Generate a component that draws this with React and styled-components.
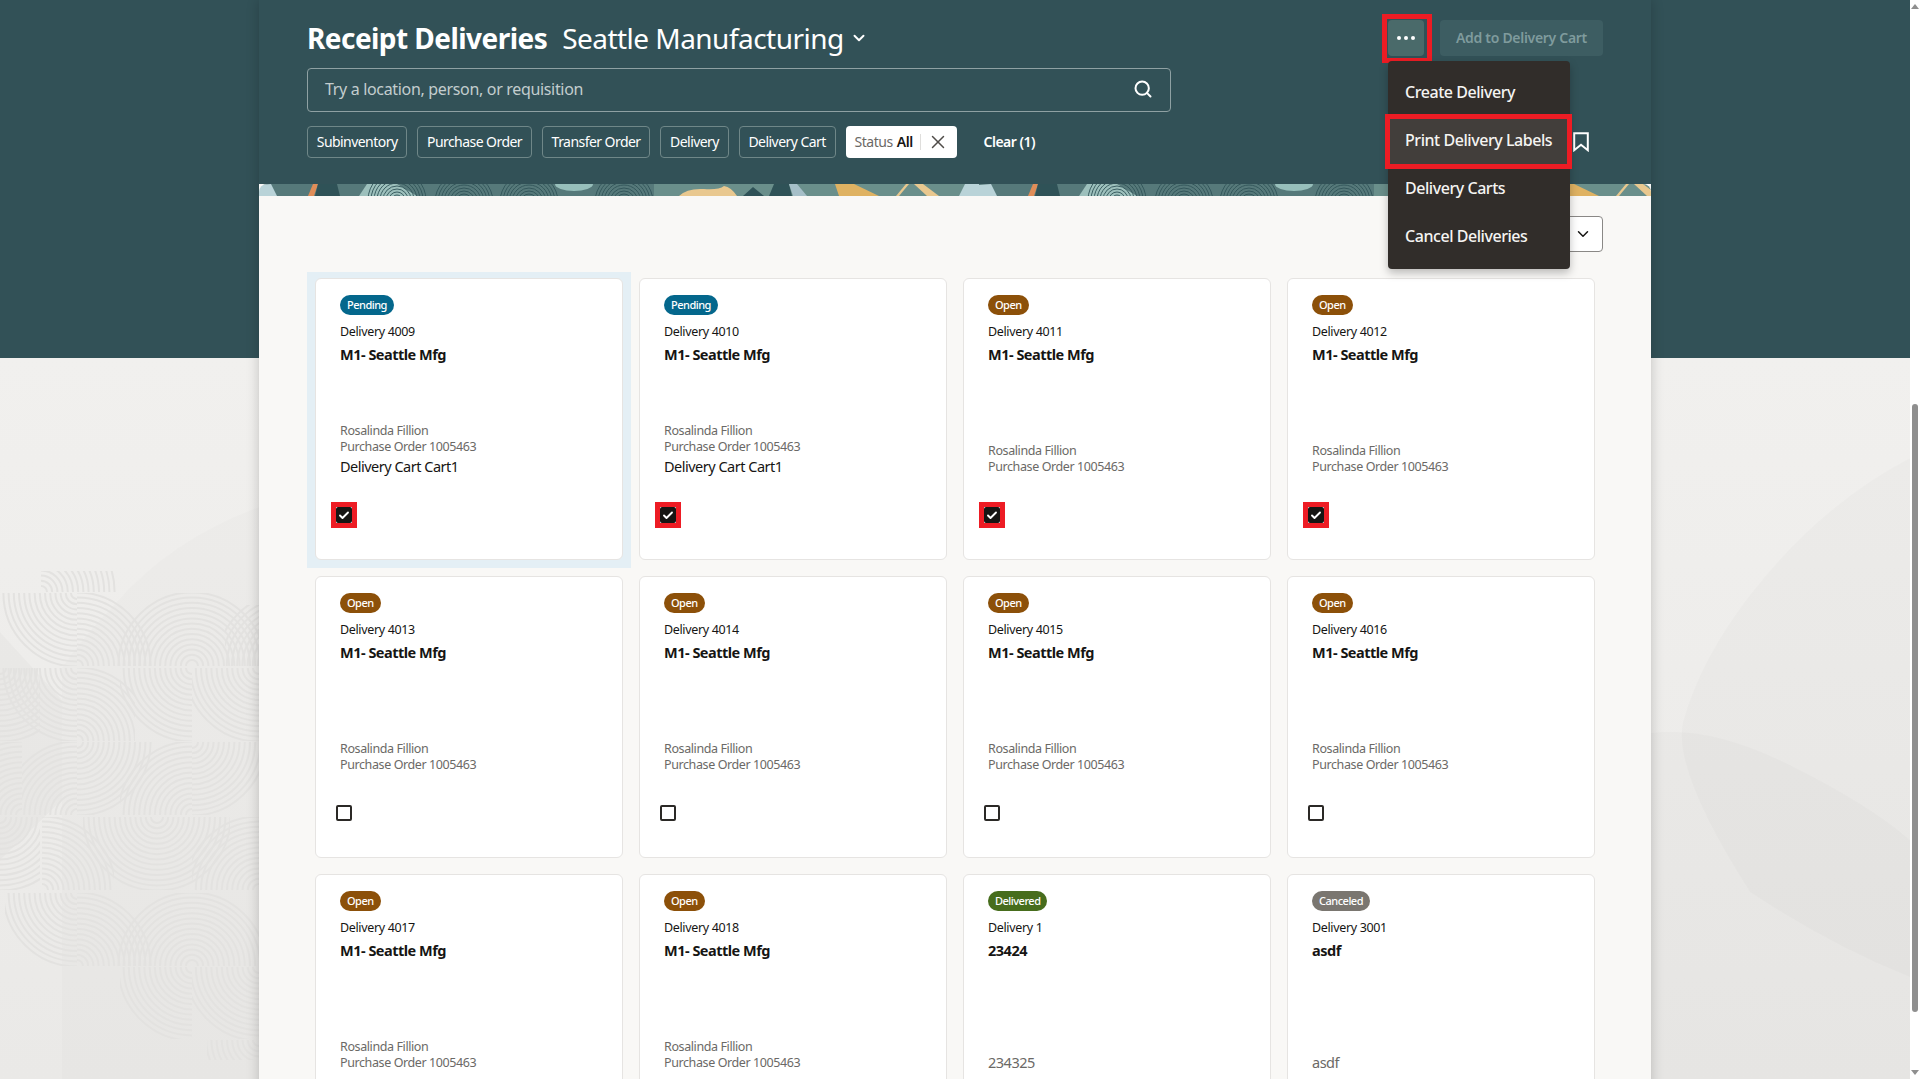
import styled, { createGlobalStyle } from "styled-components";
import { Search, ChevronDown, X, Check } from "lucide-react";

const GlobalStyle = createGlobalStyle`
  html, body {
    margin: 0;
    height: 100%;
    overflow: hidden;
    font-family: "Noto Sans", "Liberation Sans", sans-serif;
    color: #161513;
  }
  * {
    box-sizing: border-box;
  }
`;

const cards = [
  { status: "Pending", id: "Delivery 4009", title: "M1- Seattle Mfg", cart: "Delivery Cart Cart1", checked: true, selected: true },
  { status: "Pending", id: "Delivery 4010", title: "M1- Seattle Mfg", cart: "Delivery Cart Cart1", checked: true },
  { status: "Open", id: "Delivery 4011", title: "M1- Seattle Mfg", checked: true },
  { status: "Open", id: "Delivery 4012", title: "M1- Seattle Mfg", checked: true },
  { status: "Open", id: "Delivery 4013", title: "M1- Seattle Mfg" },
  { status: "Open", id: "Delivery 4014", title: "M1- Seattle Mfg" },
  { status: "Open", id: "Delivery 4015", title: "M1- Seattle Mfg" },
  { status: "Open", id: "Delivery 4016", title: "M1- Seattle Mfg" },
  { status: "Open", id: "Delivery 4017", title: "M1- Seattle Mfg" },
  { status: "Open", id: "Delivery 4018", title: "M1- Seattle Mfg" },
  { status: "Delivered", id: "Delivery 1", title: "23424", note: "234325" },
  { status: "Canceled", id: "Delivery 3001", title: "asdf", note: "asdf" },
];

const filters = ["Subinventory", "Purchase Order", "Transfer Order", "Delivery", "Delivery Cart"];
const menuItems = ["Create Delivery", "Print Delivery Labels", "Delivery Carts", "Cancel Deliveries"];

const badgeColors = {
  Pending: "#04678c",
  Open: "#8c5009",
  Delivered: "#476d1d",
  Canceled: "#7a7670",
};

// fingerprint tiles on the left of the page: clip x, y, w, h, then arc centre
const tiles = [
  [41, 571, 75, 21, 41, 592],
  [0, 593, 77, 73, 77, 593],
  [77, 593, 115, 73, 77, 666],
  [77, 593, 115, 73, 192, 666],
  [192, 593, 67, 73, 192, 666],
  [225, 605, 34, 61, 290, 666],
  [0, 668, 40, 73, 0, 668],
  [0, 668, 77, 73, 77, 668],
  [77, 668, 58, 73, 77, 741],
  [120, 668, 72, 73, 192, 668],
  [192, 668, 67, 73, 259, 668],
  [0, 742, 22, 73, 22, 815],
  [22, 742, 55, 73, 77, 815],
  [77, 742, 75, 73, 77, 742],
  [120, 742, 72, 73, 192, 815],
  [192, 742, 67, 73, 192, 742],
  [0, 817, 40, 73, 0, 817],
  [42, 817, 72, 73, 42, 890],
  [83, 817, 74, 73, 157, 817],
  [157, 817, 73, 73, 157, 817],
  [192, 817, 67, 73, 259, 890],
  [5, 893, 72, 73, 77, 893],
  [77, 893, 115, 73, 77, 966],
  [77, 893, 115, 73, 192, 966],
  [192, 893, 67, 73, 192, 966],
  [120, 967, 72, 72, 192, 967],
  [192, 967, 67, 72, 259, 967],
  [207, 1040, 52, 20, 259, 1040],
];

const radii = Array.from({ length: 14 }, (_, i) => 6 + i * 5.2);

const PageArt = () => (
  <Art viewBox="0 358 1910 721" preserveAspectRatio="none">
    <path d="M259 507 Q170 540 115 604 Q80 640 62 668 L62 1079 L259 1079 Z" fill="rgba(0,0,0,.012)" />
    <path d="M0 632 L62 700 L62 800 L0 860 Z" fill="rgba(0,0,0,.02)" />
    <path d="M1910 458 Q1820 505 1750 595 Q1700 660 1683 722 Q1672 770 1750 892 Q1830 945 1910 977 Z" fill="rgba(0,0,0,.014)" />
    <path d="M1651 733 Q1710 725 1790 765 T1910 840 L1910 1079 L1651 1079 Z" fill="rgba(0,0,0,.014)" />
    <defs>
      {tiles.map((t, i) => (
        <clipPath key={i} id={`tile-${i}`}>
          <rect x={t[0]} y={t[1]} width={t[2]} height={t[3]} />
        </clipPath>
      ))}
    </defs>
    {tiles.map((t, i) => (
      <g key={i} clipPath={`url(#tile-${i})`} fill="none" stroke="#e3e2e0" strokeWidth="2">
        {radii.map((r) => (
          <circle key={r} cx={t[4]} cy={t[5]} r={r} />
        ))}
      </g>
    ))}
  </Art>
);

const BannerArt = () => (
  <BannerSvg>
    <defs>
      <pattern id="banner-tile" width="720" height="12" patternUnits="userSpaceOnUse">
        <rect width="400" height="12" fill="#56797a" />
        <rect x="395" width="325" height="12" fill="#6a8f8b" />
        <path d="M0 12 L0 1 L12 0 L18 12 Z" fill="#b9d3d8" />
        <path d="M700 12 L706 0 L720 0 L720 12 Z" fill="#b9d3d8" />
        <path d="M49 12 L54 0 L59 0 L55 12 Z" fill="#e08d58" />
        <path d="M56 12 L59 0 L78 0 L81 12 Z" fill="#2f5257" />
        <path d="M100 12 L108 0 L138 0 L158 12 Z" fill="#9dc0bc" />
        <g fill="none" stroke="#2f5257" strokeWidth=".9">
          {[5, 8, 11, 14, 17, 20, 23, 26, 29].map((r) => (
            <g key={r}>
              <circle cx="138" cy="16" r={r} />
              <circle cx="205" cy="18" r={r} />
              <circle cx="270" cy="18" r={r} />
              <circle cx="365" cy="18" r={r} />
            </g>
          ))}
        </g>
        <ellipse cx="315" cy="0" rx="19" ry="7" fill="#97bfbb" />
        <path d="M420 12 Q428 4 445 5 Q460 6 465 2 Q472 3 478 12 Z" fill="#e9c88f" />
        <path d="M484 12 L494 3 L505 12 Z" fill="#2f5257" />
        <path d="M510 12 L515 0 L530 0 L533 12 Z" fill="#2f5257" />
        <path d="M530 0 L538 0 L548 12 L534 12 Z" fill="#a6bfc8" />
        <path d="M576 0 L595 0 L620 12 L580 12 Z" fill="#dfb262" />
        <path d="M637 12 L647 0 L650 0 L640 12 Z" fill="#e9c88f" />
        <path d="M655 0 L664 0 L680 12 L668 12 Z" fill="#e9c88f" />
      </pattern>
    </defs>
    <rect width="100%" height="12" fill="url(#banner-tile)" />
  </BannerSvg>
);

const Card = ({ card }) => (
  <CardBox $selected={card.selected}>
    <Badge $bg={badgeColors[card.status]}>{card.status}</Badge>
    <DeliveryId>{card.id}</DeliveryId>
    <CardTitle>{card.title}</CardTitle>
    <CardBottom>
      {card.note ? (
        <CartLine $muted>{card.note}</CartLine>
      ) : (
        <>
          <Meta $hasCart={!!card.cart}>
            <div>Rosalinda Fillion</div>
            <div>Purchase Order 1005463</div>
          </Meta>
          {card.cart && <CartLine>{card.cart}</CartLine>}
        </>
      )}
    </CardBottom>
    <CheckBox $checked={card.checked}>
      {card.checked && <Check size={13} strokeWidth={3.8} color="#fff" />}
    </CheckBox>
  </CardBox>
);

const App = () => (
  <Page>
    <GlobalStyle />
    <Main>
      <PageArt />
      <Panel>
        <Header>
          <TitleRow>
            <Titles>
              <Title>Receipt Deliveries</Title>
              <Location>Seattle Manufacturing</Location>
              <ChevronDown size={18} strokeWidth={2.6} color="#fff" />
            </Titles>
            <Actions>
              <MoreWrap>
                <MoreButton>
                  <Dot />
                  <Dot />
                  <Dot />
                </MoreButton>
                <Menu>
                  {menuItems.map((item) => (
                    <MenuItem key={item} $marked={item === "Print Delivery Labels"}>
                      {item}
                    </MenuItem>
                  ))}
                </Menu>
              </MoreWrap>
              <AddButton>Add to Delivery Cart</AddButton>
            </Actions>
          </TitleRow>
          <SearchBox>
            <span>Try a location, person, or requisition</span>
            <Search size={20} strokeWidth={2.4} color="#fff" />
          </SearchBox>
          <ChipRow>
            {filters.map((f) => (
              <Chip key={f}>{f}</Chip>
            ))}
            <StatusChip>
              <StatusLabel>Status</StatusLabel>
              <StatusValue>All</StatusValue>
              <StatusDivider />
              <X size={22} strokeWidth={1.6} color="#4f4c49" />
            </StatusChip>
            <ClearLink>Clear (1)</ClearLink>
            <Bookmark viewBox="0 0 16 20">
              <path d="M1.2 1.2 H14.8 V18.2 L8 12.8 L1.2 18.2 Z" fill="none" stroke="#fff" strokeWidth="2" />
            </Bookmark>
          </ChipRow>
        </Header>
        <Banner>
          <BannerArt />
        </Banner>
        <Body>
          <SortRow>
            <SortSelect>
              <ChevronDown size={18} strokeWidth={2} color="#161513" />
            </SortSelect>
          </SortRow>
          <CardGrid>
            {cards.map((card) => (
              <Card key={card.id} card={card} />
            ))}
          </CardGrid>
        </Body>
      </Panel>
    </Main>
    <ScrollTrack>
      <ArrowUp />
      <Thumb />
      <ArrowDown />
    </ScrollTrack>
  </Page>
);

export default App;

const Page = styled.div`
  display: flex;
  height: 100vh;
  overflow: hidden;
`;

const Main = styled.div`
  position: relative;
  flex: 1;
  overflow: hidden;
  background: linear-gradient(#325157 0 358px, #f1f0ee 358px, #eae9e7 100%);
`;

const Art = styled.svg`
  position: absolute;
  left: 0;
  top: 358px;
  width: 100%;
  height: 721px;
`;

const Panel = styled.div`
  position: relative;
  width: 1392px;
  margin: 0 auto;
  box-shadow: 0 0 12px rgba(0, 0, 0, 0.2);
`;

const Header = styled.div`
  background: #325157;
  padding: 20px 48px 26px;
`;

const TitleRow = styled.div`
  display: flex;
  justify-content: space-between;
  align-items: center;
  height: 36px;
`;

const Titles = styled.div`
  display: flex;
  align-items: center;
  color: #fff;
`;

const Title = styled.h1`
  margin: 0 15px 0 0;
  font-size: 28px;
  font-weight: 700;
  letter-spacing: -0.55px;
  line-height: 36px;
`;

const Location = styled.span`
  font-size: 28px;
  letter-spacing: -0.53px;
  line-height: 36px;
  margin-right: 6px;
`;

const Actions = styled.div`
  display: flex;
  gap: 16px;
`;

const MoreWrap = styled.div`
  position: relative;
`;

const MoreButton = styled.div`
  position: relative;
  display: flex;
  align-items: center;
  justify-content: center;
  gap: 3px;
  width: 36px;
  height: 36px;
  border-radius: 4px;
  background: #4a6a6a;

  &::after {
    content: "";
    position: absolute;
    inset: -6px -8px -7px -6px;
    border: 5px solid #ed1c24;
  }
`;

const Dot = styled.span`
  width: 4px;
  height: 4px;
  border-radius: 50%;
  background: #fff;
`;

const Menu = styled.div`
  position: absolute;
  left: 0;
  top: 41px;
  width: 182px;
  height: 208px;
  z-index: 5;
  padding-top: 7px;
  background: #312d2a;
  border-radius: 4px;
  box-shadow: 0 4px 8px rgba(0, 0, 0, 0.25);
`;

const MenuItem = styled.div`
  position: relative;
  display: flex;
  align-items: center;
  height: 48px;
  padding-left: 17px;
  font-size: 16px;
  font-weight: 500;
  letter-spacing: -0.45px;
  white-space: nowrap;
  color: #f5f4f2;
  background: ${(p) => (p.$marked ? "#423e3b" : "transparent")};

  ${(p) =>
    p.$marked &&
    `&::after {
      content: "";
      position: absolute;
      inset: -2px -2px -5px -3px;
      border: 5px solid #ed1c24;
    }`}
`;

const AddButton = styled.div`
  display: flex;
  align-items: center;
  justify-content: center;
  width: 163px;
  height: 36px;
  padding-bottom: 2px;
  border-radius: 4px;
  background: #3d5d62;
  color: #7f9b9d;
  font-size: 14px;
  font-weight: 600;
  letter-spacing: -0.3px;
`;

const SearchBox = styled.div`
  display: flex;
  align-items: center;
  justify-content: space-between;
  width: 864px;
  height: 44px;
  margin-top: 12px;
  padding: 0 17px 2px;
  border: 1px solid #8fa1a3;
  border-radius: 4px;
  color: #c3cdce;
  font-size: 16px;
  letter-spacing: -0.33px;
`;

const ChipRow = styled.div`
  display: flex;
  align-items: center;
  gap: 10px;
  height: 32px;
  margin-top: 14px;
  padding-right: 14px;
`;

const Chip = styled.div`
  display: flex;
  align-items: center;
  height: 32px;
  padding: 0 8.75px 2px;
  border: 1px solid #6f8788;
  border-radius: 4px;
  color: #fff;
  font-size: 14px;
  letter-spacing: -0.55px;
  white-space: nowrap;
`;

const StatusChip = styled.div`
  display: flex;
  align-items: center;
  width: 111px;
  height: 32px;
  padding-left: 9px;
  border-radius: 4px;
  background: #fff;
  font-size: 14px;
  letter-spacing: -0.45px;
`;

const StatusLabel = styled.span`
  color: #6b6966;
  margin: 0 4px 2px 0;
`;

const StatusValue = styled.span`
  margin-bottom: 2px;
  font-weight: 600;
`;

const StatusDivider = styled.span`
  width: 1px;
  height: 16px;
  margin: 0 6px 0 7px;
  background: #dfdedc;
`;

const ClearLink = styled.div`
  margin-left: 17px;
  margin-bottom: 2px;
  color: #fff;
  font-size: 14px;
  font-weight: 600;
  letter-spacing: -0.5px;
`;

const Bookmark = styled.svg`
  width: 16px;
  height: 20px;
  margin-left: auto;
`;

const Banner = styled.div`
  height: 12px;
  background: #f9f8f6;
`;

const BannerSvg = styled.svg`
  display: block;
  width: 100%;
  height: 12px;
  border-radius: 8px 8px 0 0;
`;

const Body = styled.div`
  padding: 20px 48px 60px 56px;
  background: #f9f8f6;
`;

const SortRow = styled.div`
  display: flex;
  justify-content: flex-end;
`;

const SortSelect = styled.div`
  display: flex;
  align-items: center;
  justify-content: flex-end;
  width: 200px;
  height: 36px;
  padding-right: 10px;
  background: #fff;
  border: 1px solid #8a8886;
  border-radius: 4px;
`;

const CardGrid = styled.div`
  display: grid;
  grid-template-columns: repeat(4, 308px);
  grid-auto-rows: 282px;
  gap: 16px;
  margin-top: 26px;
  isolation: isolate;
`;

const CardBox = styled.div`
  position: relative;
  display: flex;
  flex-direction: column;
  align-items: flex-start;
  padding: 16px 24px 36px;
  background: #fff;
  border: 1px solid #e6e4e2;
  border-radius: 6px;

  ${(p) =>
    p.$selected &&
    `&::before {
      content: "";
      position: absolute;
      inset: -7px -9px -9px -9px;
      z-index: -1;
      background: #e4eff5;
    }`}
`;

const Badge = styled.span`
  display: flex;
  align-items: center;
  height: 20px;
  padding: 0 7px 1px;
  border-radius: 10px;
  background: ${(p) => p.$bg};
  color: #fff;
  font-size: 11px;
  font-weight: 500;
  letter-spacing: -0.5px;
`;

const DeliveryId = styled.div`
  margin-top: 8px;
  font-size: 12.5px;
  line-height: 18px;
  letter-spacing: -0.35px;
`;

const CardTitle = styled.div`
  margin-top: 3px;
  font-size: 14.5px;
  font-weight: 700;
  line-height: 20px;
  letter-spacing: -0.5px;
`;

const CardBottom = styled.div`
  margin-top: auto;
  margin-bottom: 30px;
`;

const Meta = styled.div`
  margin-bottom: ${(p) => (p.$hasCart ? "0" : "2px")};
  color: #6b6966;
  font-size: 12.5px;
  line-height: 16px;
  letter-spacing: -0.4px;
`;

const CartLine = styled.div`
  font-size: 14.5px;
  line-height: 22px;
  letter-spacing: -0.5px;
  color: ${(p) => (p.$muted ? "#6b6966" : "#161513")};
`;

const CheckBox = styled.div`
  position: relative;
  display: flex;
  align-items: center;
  justify-content: center;
  width: 16px;
  height: 16px;
  margin-left: -4px;
  border: 2px solid ${(p) => (p.$checked ? "#161513" : "#2b2926")};
  border-radius: 2px;
  background: ${(p) => (p.$checked ? "#161513" : "#fff")};

  ${(p) =>
    p.$checked &&
    `&::after {
      content: "";
      position: absolute;
      inset: -7px;
      border: 5px solid #ed1c24;
    }`}
`;

const ScrollTrack = styled.div`
  display: flex;
  flex-direction: column;
  align-items: center;
  width: 9px;
  background: #fff;
`;

const Thumb = styled.div`
  width: 6px;
  height: 608px;
  margin-top: 395px;
  border-radius: 3px;
  background: #8f8f8f;
`;

const ArrowUp = styled.div`
  width: 0;
  height: 0;
  margin-top: 4px;
  border-left: 4px solid transparent;
  border-right: 4px solid transparent;
  border-bottom: 5px solid #8f8f8f;
`;

const ArrowDown = styled.div`
  width: 0;
  height: 0;
  margin-top: 58px;
  border-left: 4px solid transparent;
  border-right: 4px solid transparent;
  border-top: 5px solid #8f8f8f;
`;
